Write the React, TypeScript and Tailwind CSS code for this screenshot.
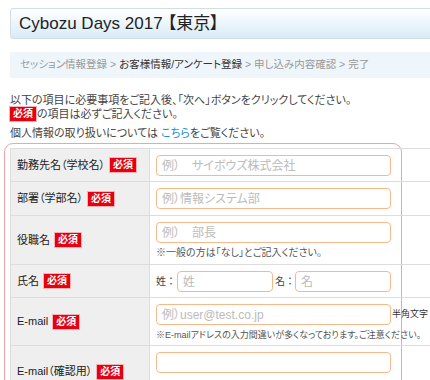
import React from 'react';

const Badge = () => (
  <span className="inline-flex h-[14px] items-center bg-[#e60012] px-[3px] text-[10px] font-bold leading-none text-white outline outline-1 outline-[#f7b3b3]">
    必須
  </span>
);

const Field = ({ placeholder, w = 'w-[235px]' }: { placeholder?: string; w?: string }) => (
  <div className={`${w} flex h-[21px] items-center rounded-[4px] border border-[#f6b98c] bg-white pl-[5px] text-[12px] text-[#bbbbbb]`}>
    {placeholder}
  </div>
);

type Row = { label: string; h: string; content: React.ReactNode };

const rows: Row[] = [
  { label: '勤務先名（学校名）', h: 'h-[33px]', content: <Field placeholder="例）　サイボウズ株式会社" /> },
  { label: '部署（学部名）', h: 'h-[34px]', content: <Field placeholder="例）情報システム部" /> },
  {
    label: '役職名',
    h: 'h-[49px]',
    content: (
      <div>
        <Field placeholder="例）　部長" />
        <p className="mt-[3px] text-[10px] leading-[14px] text-[#555]">※一般の方は「なし」とご記入ください。</p>
      </div>
    ),
  },
  {
    label: '氏名',
    h: 'h-[33px]',
    content: (
      <div className="flex items-center text-[10px] text-[#444] [font-feature-settings:normal]">
        <span className="mr-[1px]">姓：</span>
        <Field placeholder="姓" w="w-[96px]" />
        <span className="ml-[2px]">名：</span>
        <Field placeholder="名" w="w-[96px]" />
      </div>
    ),
  },
  {
    label: 'E-mail',
    h: 'h-[48px]',
    content: (
      <div>
        <div className="flex items-center">
          <Field placeholder="例）user@test.co.jp" />
          <span className="ml-[1px] text-[9px] text-[#333]">半角文字</span>
        </div>
        <p className="mt-[3px] whitespace-nowrap text-[9px] leading-[14px] text-[#555]">
          ※E-mailアドレスの入力間違いが多くなっております。ご注意ください。
        </p>
      </div>
    ),
  },
  { label: 'E-mail（確認用）', h: 'h-[52px]', content: <Field /> },
];

export default function App() {
  return (
    <div className="h-[380px] w-[430px] overflow-hidden bg-white font-['Liberation_Sans','Noto_Sans_CJK_JP',sans-serif] text-[#333] [font-feature-settings:'palt']">
      <div className="ml-[10px] mt-[8px] flex h-[31px] w-[600px] items-center rounded-[3px] border border-[#d3dde4] bg-gradient-to-b from-white to-[#d8ebf7] pl-[8px] text-[17px] text-[#222]">
        Cybozu Days 2017<span className="ml-[5px]">【東京】</span>
      </div>

      <div className="ml-[10px] mt-[13px] flex h-[26px] w-[600px] items-center bg-[#eef6fb] pl-[10px] text-[10.5px] text-[#999]">
        セッション情報登録 &gt; <span className="ml-[3px] text-[#333]">お客様情報/アンケート登録</span>&nbsp;&gt; 申し込み内容確認 &gt; 完了
      </div>

      <div className="ml-[10px] mt-[15px] text-[11px] leading-[14px] text-[#444]">
        <p>以下の項目に必要事項をご記入後、「次へ」ボタンをクリックしてください。</p>
        <p className="flex items-center">
          <Badge />
          <span className="ml-[1px]">の項目は必ずご記入ください。</span>
        </p>
        <p className="mt-[5px]">
          個人情報の取り扱いについては <span className="text-[#1a8ad6]">こちら</span>をご覧ください。
        </p>
      </div>

      <div className="ml-[4px] mt-[3px] h-[300px] w-[398px] rounded-t-[9px] border border-[#f4a3a3] pl-[5px] pt-[4px]">
        <div className="w-[600px] border-l border-t border-[#dddddd]">
          {rows.map((r) => (
            <div key={r.label} className={`flex ${r.h} border-b border-[#dddddd]`}>
              <div className="flex w-[139px] shrink-0 items-center gap-[5px] border-r border-[#dddddd] bg-[#efefef] pl-[6px] text-[11px] text-[#222]">
                <span>{r.label}</span>
                <Badge />
              </div>
              <div className="flex flex-1 items-start pl-[6px] pt-[6px]">{r.content}</div>
            </div>
          ))}
        </div>
      </div>
    </div>
  );
}
